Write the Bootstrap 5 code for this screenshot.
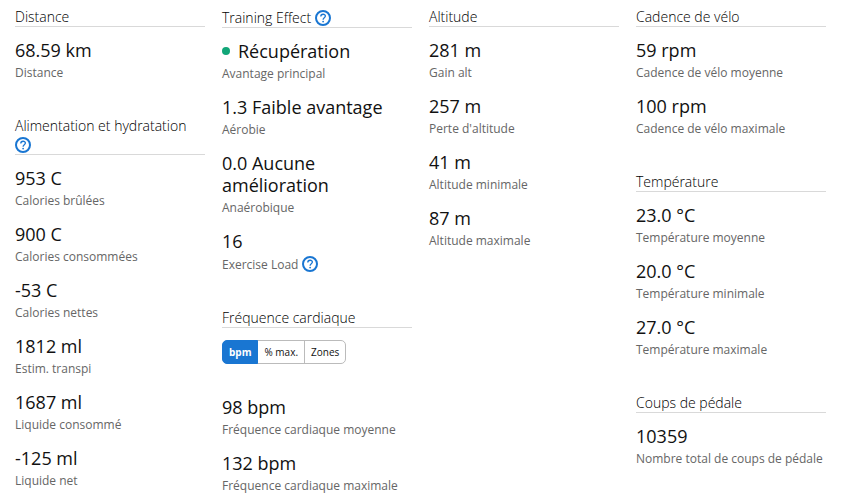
<!DOCTYPE html>
<html lang="fr">
<head>
<meta charset="utf-8">
<title>Statistiques</title>
<meta name="viewport" content="width=device-width, initial-scale=1">
<link href="https://cdn.jsdelivr.net/npm/bootstrap@5.3.0/dist/css/bootstrap.min.css" rel="stylesheet">
<style>
body{font-family:"Open Sans",sans-serif;color:#111;background:#fff}
.stats{display:grid;grid-template-columns:repeat(4,minmax(0,1fr));column-gap:17px;padding:8px 20px 0 15px}
.group{margin-bottom:35px}
.group:last-child{margin-bottom:0}
.group-title{font-size:14px;line-height:18px;font-weight:300;color:#000;border-bottom:1px solid #d9d9d9;margin:0 0 12px}
.stat{margin-bottom:13px}
.stat:last-child{margin-bottom:0}
.value{font-size:18px;line-height:22px;margin:0}
.caption{font-size:12px;line-height:18px;padding-top:3px;color:#666}
.help{width:16px;height:18px;color:#1976d2;border:0;padding:0;background:none;vertical-align:text-bottom;display:inline-flex;align-items:center}
.group-title .help{margin-top:1px}
.dot{width:8px;height:8px;background:#11a678;margin-right:8px}
.units{margin-bottom:32px}
.units .btn{font-size:10px;line-height:14px;padding:4px 6px;border:1px solid #bbb;border-radius:5px;color:#111}
.units .btn-check:checked+.btn{background:#1976d2;border-color:#1976d2;color:#fff;font-weight:700}
</style>
</head>
<body>
<svg class="d-none" aria-hidden="true">
<symbol id="question" viewBox="0 0 16 16"><circle cx="8" cy="8" r="7" fill="none" stroke="currentColor" stroke-width="2"/><path d="M5.8 6.4C5.8 3.6 10.4 3.6 10.4 6.1C10.4 7.8 8.1 7.8 8.1 9.7" fill="none" stroke="currentColor" stroke-width="1.3"/><circle cx="8.1" cy="11.6" r=".9" fill="currentColor"/></symbol>
</svg>
<main class="stats">
<div>
<section class="group">
<h2 class="group-title">Distance</h2>
<div class="stat"><div class="value">68.59 km</div><div class="caption">Distance</div></div>
</section>
<section class="group">
<h2 class="group-title">Alimentation et hydratation <button type="button" class="help" aria-label="Aide"><svg width="16" height="16"><use href="#question"/></svg></button></h2>
<div class="stat"><div class="value">953 C</div><div class="caption">Calories brûlées</div></div>
<div class="stat"><div class="value">900 C</div><div class="caption">Calories consommées</div></div>
<div class="stat"><div class="value">-53 C</div><div class="caption">Calories nettes</div></div>
<div class="stat"><div class="value">1812 ml</div><div class="caption">Estim. transpi</div></div>
<div class="stat"><div class="value">1687 ml</div><div class="caption">Liquide consommé</div></div>
<div class="stat"><div class="value">-125 ml</div><div class="caption">Liquide net</div></div>
</section>
</div>
<div>
<section class="group">
<h2 class="group-title">Training Effect <button type="button" class="help" aria-label="Aide"><svg width="16" height="16"><use href="#question"/></svg></button></h2>
<div class="stat"><div class="value d-flex align-items-center"><span class="dot rounded-circle"></span>Récupération</div><div class="caption">Avantage principal</div></div>
<div class="stat"><div class="value">1.3 Faible avantage</div><div class="caption">Aérobie</div></div>
<div class="stat"><div class="value">0.0 Aucune amélioration</div><div class="caption">Anaérobique</div></div>
<div class="stat"><div class="value">16</div><div class="caption">Exercise Load <button type="button" class="help" aria-label="Aide"><svg width="16" height="16"><use href="#question"/></svg></button></div></div>
</section>
<section class="group">
<h2 class="group-title">Fréquence cardiaque</h2>
<div class="btn-group units" role="group" aria-label="Unité">
<input type="radio" class="btn-check" name="unit" id="unit-bpm" checked><label class="btn" for="unit-bpm">bpm</label>
<input type="radio" class="btn-check" name="unit" id="unit-max"><label class="btn" for="unit-max">% max.</label>
<input type="radio" class="btn-check" name="unit" id="unit-zones"><label class="btn" for="unit-zones">Zones</label>
</div>
<div class="stat"><div class="value">98 bpm</div><div class="caption">Fréquence cardiaque moyenne</div></div>
<div class="stat"><div class="value">132 bpm</div><div class="caption">Fréquence cardiaque maximale</div></div>
</section>
</div>
<div>
<section class="group">
<h2 class="group-title">Altitude</h2>
<div class="stat"><div class="value">281 m</div><div class="caption">Gain alt</div></div>
<div class="stat"><div class="value">257 m</div><div class="caption">Perte d'altitude</div></div>
<div class="stat"><div class="value">41 m</div><div class="caption">Altitude minimale</div></div>
<div class="stat"><div class="value">87 m</div><div class="caption">Altitude maximale</div></div>
</section>
</div>
<div>
<section class="group">
<h2 class="group-title">Cadence de vélo</h2>
<div class="stat"><div class="value">59 rpm</div><div class="caption">Cadence de vélo moyenne</div></div>
<div class="stat"><div class="value">100 rpm</div><div class="caption">Cadence de vélo maximale</div></div>
</section>
<section class="group">
<h2 class="group-title">Température</h2>
<div class="stat"><div class="value">23.0 °C</div><div class="caption">Température moyenne</div></div>
<div class="stat"><div class="value">20.0 °C</div><div class="caption">Température minimale</div></div>
<div class="stat"><div class="value">27.0 °C</div><div class="caption">Température maximale</div></div>
</section>
<section class="group">
<h2 class="group-title">Coups de pédale</h2>
<div class="stat"><div class="value">10359</div><div class="caption">Nombre total de coups de pédale</div></div>
</section>
</div>
</main>
<script src="https://cdn.jsdelivr.net/npm/bootstrap@5.3.0/dist/js/bootstrap.bundle.min.js"></script>
</body>
</html>
